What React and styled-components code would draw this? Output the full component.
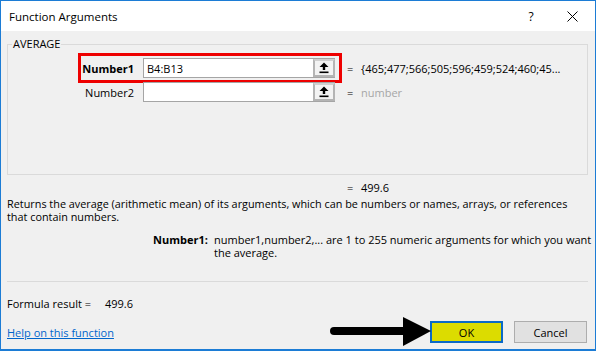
import React from "react";
import styled, { createGlobalStyle } from "styled-components";

const GlobalStyle = createGlobalStyle`
  html, body { margin: 0; padding: 0; background: #f0f0f0; }
  body { font-family: "Open Sans", "Noto Sans", sans-serif; }
  * { box-sizing: border-box; }
`;

const FONT = `"Open Sans", "Noto Sans", sans-serif`;

const Window = styled.div`
  position: relative;
  width: 596px;
  height: 351px;
  border: 1px solid #1c7cd5;
  border-bottom-width: 2px;
  background: #f0f0f0;
  display: flex;
  flex-direction: column;
  font-family: ${FONT};
  font-size: 11px;
  color: #000;
  overflow: hidden;
`;

const TitleBar = styled.div`
  height: 30px;
  flex: none;
  background: #fff;
  display: flex;
  align-items: center;
  padding-left: 8px;
`;

const Title = styled.div`
  font-size: 11.5px;
  color: #000;
  white-space: nowrap;
  margin-right: auto;
`;

const TitleButton = styled.div`
  width: ${(p) => p.$w}px;
  height: 30px;
  flex: none;
  display: flex;
  align-items: center;
  justify-content: center;
  font-size: 12px;
  margin-left: ${(p) => p.$ml || 0}px;
`;

const Body = styled.div`
  flex: 1;
  display: flex;
  flex-direction: column;
  padding: 0 7px 0 6px;
`;

const GroupBox = styled.div`
  position: relative;
  margin-top: 13px;
  height: 131px;
  border: 1px solid #dadada;
  padding-top: 13px;
  display: flex;
  flex-direction: column;
  gap: 4px;
`;

const Legend = styled.span`
  position: absolute;
  top: -8px;
  left: 4px;
  padding: 0 1px;
  background: #f0f0f0;
  line-height: 14px;
`;

const ArgRow = styled.div`
  position: relative;
  display: flex;
  align-items: center;
  height: 20px;
`;

const Highlight = styled.div`
  position: absolute;
  left: 70px;
  top: -5px;
  width: 264px;
  height: 30px;
  border: 3px solid #ee0000;
  pointer-events: none;
`;

const ArgLabel = styled.div`
  width: 127px;
  padding-right: 1px;
  text-align: right;
  font-weight: ${(p) => (p.$bold ? 700 : 400)};
`;

const InputBox = styled.div`
  margin-left: 8px;
  width: 192px;
  height: 20px;
  border: 1px solid #a5a5a5;
  background: #fff;
  display: flex;
  align-items: center;
  padding-left: 3px;
`;

const InputText = styled.span`
  flex: 1;
`;

const RefButton = styled.div`
  width: 22px;
  height: 18px;
  margin-right: -1px;
  border: 2px solid #b4b4b4;
  border-top-color: #d0d0d0;
  background: #f3f3f3;
  display: flex;
  align-items: center;
  justify-content: center;
`;

const Eq = styled.span`
  margin-left: ${(p) => (p.$flush ? 0 : 12)}px;
  width: 14px;
`;

const Value = styled.span`
  color: ${(p) => (p.$muted ? "#a6a6a6" : "#000")};
  white-space: nowrap;
`;

const ResultLine = styled.div`
  margin-top: 6px;
  padding-left: 340px;
  line-height: 13px;
  display: flex;
`;

const Description = styled.div`
  margin-top: 3px;
  line-height: 13px;
  font-size: 10.85px;
  white-space: nowrap;
`;

const ArgHelp = styled.div`
  margin-top: 11px;
  display: grid;
  grid-template-columns: 61px 1fr;
  padding-left: 146px;
  line-height: 12.5px;
  white-space: nowrap;
`;

const ArgHelpName = styled.span`
  font-weight: 700;
`;

const Separator = styled.div`
  margin-top: 22px;
  height: 1px;
  background: #dadada;
`;

const FormulaResult = styled.div`
  margin-top: 15px;
  line-height: 13px;
`;

const ResultNumber = styled.span`
  margin-left: 14px;
`;

const Footer = styled.div`
  margin-top: 11px;
  display: flex;
  align-items: center;
  padding-right: 1px;
`;

const HelpLink = styled.a`
  color: #0066cc;
  text-decoration: underline;
  margin-right: auto;
`;

const Button = styled.div`
  width: 73px;
  height: 22px;
  margin-left: ${(p) => p.$ml || 0}px;
  display: flex;
  align-items: center;
  justify-content: center;
  background: ${(p) => (p.$primary ? "#dcdc00" : "#e1e1e1")};
  border: ${(p) => (p.$primary ? "2px solid #0b6ac7" : "1px solid #adadad")};
`;

const Pointer = styled.svg`
  position: absolute;
  left: 326px;
  top: 314px;
`;

const UpIcon = () => (
  <svg width="10" height="12" viewBox="0 0 10 12">
    <polygon points="5,0.5 9.5,5 6.2,5 6.2,8 3.8,8 3.8,5 0.5,5" fill="#000" />
    <rect x="0.5" y="9.5" width="9" height="1.6" fill="#000" />
  </svg>
);

const CloseIcon = () => (
  <svg width="11" height="11" viewBox="0 0 11 11">
    <path d="M0.5 0.5 L10.5 10.5 M10.5 0.5 L0.5 10.5" stroke="#000" strokeWidth="1" />
  </svg>
);

const rows = [
  { name: "Number1", value: "B4:B13", result: "{465;477;566;505;596;459;524;460;45...", bold: true },
  { name: "Number2", value: "", result: "number", muted: true },
];

export default function App() {
  return (
    <>
      <GlobalStyle />
      <Window>
        <TitleBar>
          <Title>Function Arguments</Title>
          <TitleButton $w={20}>?</TitleButton>
          <TitleButton $w={46} $ml={8}>
            <CloseIcon />
          </TitleButton>
        </TitleBar>
        <Body>
          <GroupBox>
            <Legend>AVERAGE</Legend>
            {rows.map((r) => (
              <ArgRow key={r.name}>
                {r.bold && <Highlight />}
                <ArgLabel $bold={r.bold}>{r.name}</ArgLabel>
                <InputBox>
                  <InputText>{r.value}</InputText>
                  <RefButton>
                    <UpIcon />
                  </RefButton>
                </InputBox>
                <Eq>=</Eq>
                <Value $muted={r.muted}>{r.result}</Value>
              </ArgRow>
            ))}
          </GroupBox>
          <ResultLine>
            <Eq $flush>=</Eq>
            <Value>499.6</Value>
          </ResultLine>
          <Description>
            Returns the average (arithmetic mean) of its arguments, which can be numbers or names, arrays, or references
            <br />
            that contain numbers.
          </Description>
          <ArgHelp>
            <ArgHelpName>Number1:</ArgHelpName>
            <span>
              number1,number2,... are 1 to 255 numeric arguments for which you want
              <br />
              the average.
            </span>
          </ArgHelp>
          <Separator />
          <FormulaResult>
            Formula result =<ResultNumber>499.6</ResultNumber>
          </FormulaResult>
          <Footer>
            <HelpLink>Help on this function</HelpLink>
            <Button $primary>OK</Button>
            <Button $ml={11}>Cancel</Button>
          </Footer>
        </Body>
        <Pointer width="106" height="34" viewBox="0 0 106 34">
          <line x1="7" y1="16" x2="80" y2="16" stroke="#000" strokeWidth="8" strokeLinecap="round" />
          <polygon points="76,2 104,16 76,31" fill="#000" />
        </Pointer>
      </Window>
    </>
  );
}
